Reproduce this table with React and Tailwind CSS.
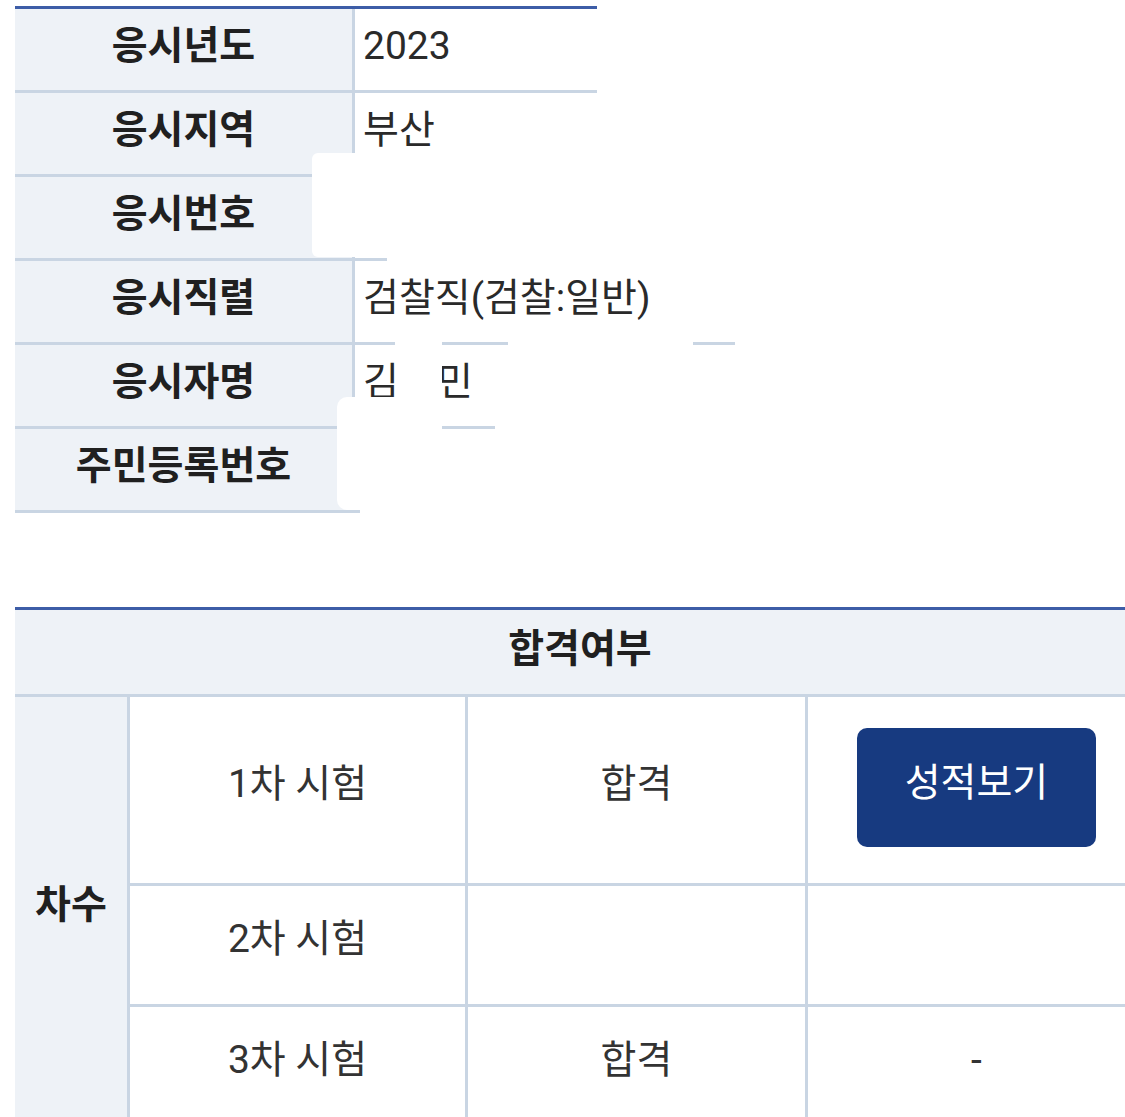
const info = [
  { label: '응시년도', value: '2023' },
  { label: '응시지역', value: '부산' },
  { label: '응시번호', value: '' },
  { label: '응시직렬', value: '검찰직(검찰:일반)' },
  { label: '응시자명', value: 'name' },
  { label: '주민등록번호', value: '' },
];

const rounds = [
  { name: '1차 시험', result: '합격', extra: 'button', h: 'h-[189px]' },
  { name: '2차 시험', result: '', extra: '', h: 'h-[121px]' },
  { name: '3차 시험', result: '합격', extra: '-', h: 'h-[121px]' },
];

// white patches painted over the private data in the original capture
const patches = [
  'left-[597px] top-0 w-[528px] h-[155px]',
  'left-[312px] top-[153px] w-[813px] h-[104px] rounded-[6px]',
  'left-[387px] top-[256px] w-[738px] h-[8px]',
  'left-[395px] top-[322px] w-[47px] h-[100px] rounded-[10px]',
  'left-[508px] top-[336px] w-[185px] h-[14px]',
  'left-[735px] top-[336px] w-[390px] h-[14px]',
  'left-[337px] top-[397px] w-[105px] h-[113px] rounded-l-[10px]',
  'left-[495px] top-[397px] w-[630px] h-[125px]',
  'left-[442px] top-[432px] w-[53px] h-[90px]',
  'left-[360px] top-[505px] w-[82px] h-[15px]',
];

const App = () => {
  return (
    <div className="relative w-[1125px] h-[1117px] overflow-hidden bg-white font-[Roboto,'Noto_Sans_CJK_KR',sans-serif] text-[39px] text-[#2a2a2a]">
      <div className="ml-[15px] pt-[6px] w-[1110px]">
        <div className="border-t-[3px] border-[#3d5da7]">
          {info.map(r => (
            <div key={r.label} className="flex h-[84px] border-b-[3px] border-[#c9d5e3]">
              <div className="w-[337px] bg-[#eef2f7] flex items-center justify-center font-bold text-[#202020] pb-[6px]">
                {r.label}
              </div>
              <div className="flex-1 flex items-center border-l-[3px] border-[#c9d5e3] pl-[8px] pb-[6px]">
                {r.value === 'name' ? (
                  <>
                    <span>김</span>
                    <span className="ml-[38px]">민</span>
                  </>
                ) : r.value}
              </div>
            </div>
          ))}
        </div>
      </div>

      {patches.map(p => (
        <div key={p} className={`absolute bg-white ${p}`} />
      ))}

      <div className="ml-[15px] mt-[94px] w-[1130px] border-t-[3px] border-[#3d5da7]">
        <div className="h-[87px] bg-[#eef2f7] border-b-[3px] border-[#c9d5e3] flex items-center justify-center font-bold text-[#202020] pb-[6px]">
          합격여부
        </div>
        <div className="flex">
          <div className="w-[115px] bg-[#eef2f7] border-r-[3px] border-[#c9d5e3] flex items-center justify-center font-bold text-[#202020] pb-[14px]">
            차수
          </div>
          <div className="flex-1">
            {rounds.map(r => (
              <div key={r.name} className={`flex ${r.h} border-b-[3px] border-[#c9d5e3]`}>
                <div className="w-[338px] border-r-[3px] border-[#c9d5e3] flex items-center justify-center pb-[12px] text-[#333]">
                  {r.name}
                </div>
                <div className="w-[340px] border-r-[3px] border-[#c9d5e3] flex items-center justify-center pb-[12px] text-[#333]">
                  {r.result}
                </div>
                <div className="flex-1 flex items-center justify-center text-[#333]">
                  {r.extra === 'button' ? (
                    <button className="w-[239px] h-[119px] mb-[6px] rounded-[10px] bg-[#173a80] text-white flex items-center justify-center pb-[8px]">
                      성적보기
                    </button>
                  ) : (
                    <span className="pb-[12px]">{r.extra}</span>
                  )}
                </div>
              </div>
            ))}
          </div>
        </div>
      </div>
    </div>
  );
};

export default App;
